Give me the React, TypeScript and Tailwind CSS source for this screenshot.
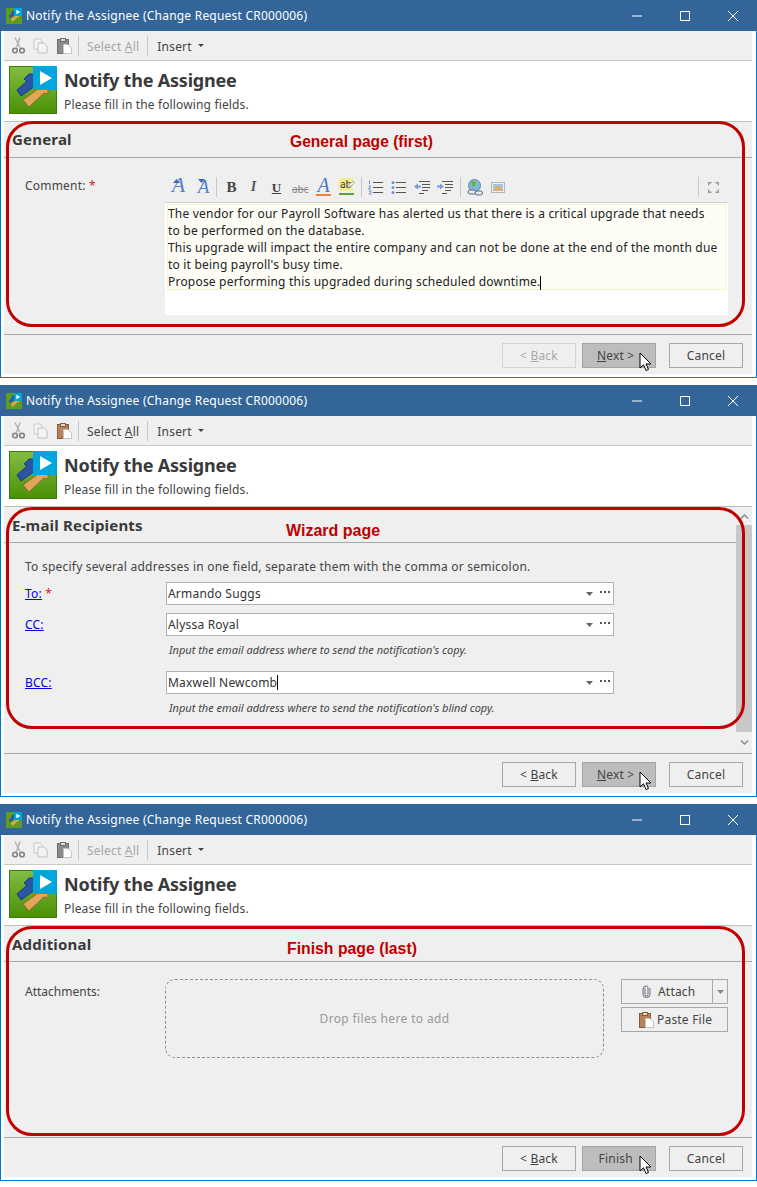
import React from "react";

const BLUE = "M8 24 L18 15 L15 13 L20 8 L26 8 L26 20 L12 30 Z";
const TAN = "M14 34 L29 23 L27 20 L37 20 L39 21 L39 28 L35 27 L20 41 Z";

function Logo() {
  return (
    <svg width="48" height="48" viewBox="0 0 48 48" className="shrink-0">
      <defs>
        <linearGradient id="lg" x1="0" y1="0" x2="0" y2="1">
          <stop offset="0" stopColor="#82bd45" />
          <stop offset="1" stopColor="#4a9005" />
        </linearGradient>
      </defs>
      <rect x="0.5" y="0.5" width="47" height="47" fill="url(#lg)" stroke="#3f7d0a" />
      <path d={BLUE} fill="#2a55a5" stroke="#1c3c78" />
      <path d={TAN} fill="#dfa858" stroke="#8a6a30" />
      <rect x="24" y="0" width="24" height="24" fill="#00a6dc" />
      <path d="M31 5 L43 12 L31 19 Z" fill="#fff" />
    </svg>
  );
}

function SmallLogo() {
  return (
    <svg width="16" height="16" viewBox="0 0 48 48" className="shrink-0">
      <rect width="48" height="48" fill="#5c9c20" />
      <path d={BLUE} fill="#2a55a5" />
      <path d={TAN} fill="#dfa858" />
      <rect x="24" y="0" width="24" height="24" fill="#00a6dc" />
      <path d="M31 5 L43 12 L31 19 Z" fill="#fff" />
    </svg>
  );
}

function Scissors() {
  return (
    <svg width="14" height="17" viewBox="0 0 14 17" fill="none">
      <path d="M3 0.5 L8 10.5 M8 0.5 L4.5 10.5" stroke="#b0b0b0" strokeWidth="1.4" />
      <circle cx="3" cy="13.5" r="2.3" stroke="#808080" strokeWidth="1.6" />
      <circle cx="10" cy="13.5" r="2.3" stroke="#808080" strokeWidth="1.6" />
    </svg>
  );
}

function CopyIcon() {
  return (
    <svg width="15" height="16" viewBox="0 0 15 16" fill="none">
      <path d="M1 1 H7 L9 3 V11 H1 Z" fill="#f4f4f4" stroke="#c8c8c8" />
      <path d="M5 5 H11 L14 8 V15 H5 Z" fill="#f4f4f4" stroke="#c0c0c0" />
    </svg>
  );
}

function PasteIcon({ on }: { on?: boolean }) {
  const body = on ? "#b8825a" : "#8a8a8a";
  const dark = on ? "#8a5a34" : "#6e6e6e";
  return (
    <svg width="15" height="16" viewBox="0 0 15 16" fill="none">
      <rect x="0.5" y="1.5" width="11" height="14" fill={body} stroke={dark} />
      <rect x="3.5" y="0.5" width="5" height="3" fill="#d8d8d8" stroke={dark} />
      <path d="M6.5 6.5 H11 L14.5 10 V15.5 H6.5 Z" fill="#fff" stroke="#c4c4c4" />
    </svg>
  );
}

function TitleBar() {
  return (
    <div className="h-[31px] bg-[#336599] flex items-center pl-[6px] text-white text-[12px] tracking-[0.22px] shrink-0">
      <SmallLogo />
      <span className="ml-[4px]">Notify the Assignee (Change Request CR000006)</span>
      <div className="ml-auto flex items-center">
        <svg width="10" height="2" viewBox="0 0 10 2" className="mr-[38px]"><path d="M0 1 H10" stroke="#fff" /></svg>
        <svg width="10" height="10" viewBox="0 0 10 10" className="mr-[38px]"><rect x="0.5" y="0.5" width="9" height="9" fill="none" stroke="#fff" /></svg>
        <svg width="10" height="10" viewBox="0 0 10 10" className="mr-[19px]"><path d="M0 0 L10 10 M10 0 L0 10" stroke="#fff" /></svg>
      </div>
    </div>
  );
}

function Toolbar({ active }: { active?: boolean }) {
  return (
    <div className="h-[30px] border-b border-[#c8c8c8] flex items-center pl-[8px] text-[12px] text-[#444] shrink-0">
      <Scissors />
      <span className="ml-[7px]"><CopyIcon /></span>
      <span className="ml-[9px]"><PasteIcon on={active} /></span>
      <div className="w-px h-[20px] bg-[#c8c8c8] ml-[6px]" />
      <span className={`ml-[8px] mt-[2px] ${active ? "" : "text-[#a6a6a6]"}`}>Select <u>A</u>ll</span>
      <div className="w-px h-[20px] bg-[#c8c8c8] ml-[8px]" />
      <span className="ml-[9px] mt-[2px]">Insert</span>
      <svg width="6" height="3" viewBox="0 0 6 3" className="ml-[6px]"><path d="M0 0 H6 L3 3 Z" fill="#444" /></svg>
    </div>
  );
}

function Header() {
  return (
    <div className="h-[61px] bg-white border-b border-[#c0c0c0] flex items-start pl-[5px] pt-[5px] shrink-0">
      <Logo />
      <div className="ml-[7px]">
        <div className="text-[18px] tracking-[-0.2px] font-bold text-[#3a3a3a] leading-[28px]">Notify the Assignee</div>
        <div className="text-[12px] tracking-[0.14px] text-[#444] leading-[17px] mt-[2px]">Please fill in the following fields.</div>
      </div>
    </div>
  );
}

function Section({ title, pt }: { title: string; pt: string }) {
  return (
    <div className={`h-[36px] border-b border-[#a8a8a8] pl-[8px] text-[15px] font-bold text-[#3a3a3a] leading-[22px] shrink-0 ${pt}`}>
      {title}
    </div>
  );
}

function Cursor() {
  return (
    <svg width="14" height="21" viewBox="0 0 14 21" className="absolute right-[2px] top-[8px]">
      <path d="M1 1 V16 L4.5 12.8 L7 18.5 L9.5 17.5 L7 12 H12 Z" fill="#fff" stroke="#000" />
    </svg>
  );
}

function Btn({ children, kind }: { children: React.ReactNode; kind?: "off" | "on" }) {
  const cls =
    kind === "off"
      ? "border-[#d4d4d4] text-[#a8a8a8]"
      : kind === "on"
      ? "border-[#a4a4a4] bg-[#bdbdbd] text-[#444]"
      : "border-[#a8a8a8] text-[#444]";
  return (
    <div className={`relative w-[74px] h-[25px] border flex items-center justify-center text-[12px] ${cls}`}>
      {children}
    </div>
  );
}

function Footer({ backOff, next }: { backOff?: boolean; next: React.ReactNode }) {
  return (
    <div className="h-[40px] border-t border-[#a8a8a8] flex items-start justify-end pt-[8px] pr-[9px] gap-[6px] shrink-0">
      <Btn kind={backOff ? "off" : undefined}>
        &lt;&nbsp;<u>B</u>ack
      </Btn>
      <Btn kind="on">
        {next}
        <Cursor />
      </Btn>
      <div className="ml-[7px]">
        <Btn>Cancel</Btn>
      </div>
    </div>
  );
}

function Ring({ cls }: { cls: string }) {
  return (
    <div className={`absolute left-[6px] w-[739px] border-[3px] border-[#c00000] rounded-[26px] pointer-events-none ${cls}`} />
  );
}

function Note({ children, cls }: { children: string; cls: string }) {
  return (
    <div className={`absolute font-['Liberation_Sans',sans-serif] tracking-normal font-bold leading-[18px] text-[#c00000] whitespace-nowrap ${cls}`}>
      {children}
    </div>
  );
}

function Window({ h, children, active, overlay }: { h: string; children: React.ReactNode; active?: boolean; overlay: React.ReactNode }) {
  return (
    <div className={`relative flex flex-col ${h}`}>
      <TitleBar />
      <div className="flex-1 min-h-0 border-x border-b border-[#0078d7] bg-white pl-[3px] pr-[3px] pb-[3px] flex">
        <div className="flex-1 min-w-0 bg-[#efefef] mr-px flex flex-col">
          <Toolbar active={active} />
          <Header />
          {children}
        </div>
      </div>
      {overlay}
    </div>
  );
}

function Sep({ ml }: { ml: string }) {
  return <div className={`w-px h-[20px] bg-[#c8c8c8] ${ml}`} />;
}

function FontA({ up }: { up?: boolean }) {
  return (
    <span className={`relative w-[17px] h-[18px] flex items-end justify-center font-['Liberation_Serif',serif] italic text-[#5580cc] leading-none tracking-normal ${up ? "text-[22px]" : "text-[19px]"}`}>
      A
      <svg width="7" height="4" viewBox="0 0 7 4" className="absolute left-[3px] top-[1px]">
        <path d={up ? "M0 4 L3.5 0 L7 4 Z" : "M0 0 H7 L3.5 4 Z"} fill="#3f68b4" />
      </svg>
    </span>
  );
}

function ListIcon({ dots }: { dots?: boolean }) {
  return (
    <svg width="15" height="15" viewBox="0 0 15 15" fill="none">
      <path d="M5 2.5 H15 M5 7.5 H15 M5 12.5 H15" stroke="#555" />
      {dots ? (
        <g fill="#6f90cc">
          <rect x="0.5" y="1" width="3" height="3" rx="1.5" />
          <rect x="0.5" y="6" width="3" height="3" rx="1.5" />
          <rect x="0.5" y="11" width="3" height="3" rx="1.5" />
        </g>
      ) : (
        <path d="M1.5 0.5 V4 M0.5 6 H3 L0.5 9 H3 M0.5 11 H3 V14 H0.5" stroke="#6f90cc" />
      )}
    </svg>
  );
}

function IndentIcon({ out }: { out?: boolean }) {
  return (
    <svg width="16" height="15" viewBox="0 0 16 15" fill="none">
      <path d="M5 1.5 H16 M8 4.5 H16 M8 7.5 H16 M8 10.5 H14 M5 13.5 H10" stroke="#555" />
      <path d={out ? "M0 6.5 L4 3.5 V5.5 H7 V7.5 H4 V9.5 Z" : "M7 6.5 L3 3.5 V5.5 H0 V7.5 H3 V9.5 Z"} fill="#7c9cd8" />
    </svg>
  );
}

function EditorToolbar() {
  return (
    <div className="h-[30px] flex items-center text-[#444] tracking-normal">
      <span className="ml-[5px]"><FontA up /></span>
      <span className="ml-[8px]"><FontA /></span>
      <Sep ml="ml-[4px]" />
      <span className="ml-[9px] w-[11px] text-center font-['Liberation_Serif',serif] font-bold text-[15px] leading-none">B</span>
      <span className="ml-[12px] w-[9px] text-center font-['Liberation_Serif',serif] font-bold italic text-[14px] leading-none text-[#555]">I</span>
      <span className="ml-[12px] w-[13px] text-center font-['Liberation_Serif',serif] font-bold underline text-[13px] leading-none text-[#444]">U</span>
      <span className="ml-[9px] w-[15px] text-center text-[10px] leading-none text-[#888] line-through mt-[3px]">abc</span>
      <span className="ml-[9px] w-[15px] h-[18px] flex flex-col items-center font-['Liberation_Serif',serif] italic text-[20px] leading-[14px] text-[#4a78c8]">
        A<span className="w-[15px] h-[2px] bg-[#ee8040] mt-[2px] shrink-0" />
      </span>
      <span className="relative ml-[8px] w-[16px] h-[18px] flex flex-col items-start text-[10px] leading-[13px] text-[#333]">
        <span className="bg-[#f4ee90] px-px">ab</span>
        <span className="w-[15px] h-[2px] bg-[#5aa03c] mt-[2px]" />
        <svg width="8" height="9" viewBox="0 0 8 9" className="absolute right-0 top-[2px]" fill="none">
          <path d="M1 8 L2 5 L6 1 L7.5 2.5 L3.5 6.5 Z" fill="#f4f4f4" stroke="#9a9a9a" strokeWidth="0.8" />
        </svg>
      </span>
      <Sep ml="ml-[6px]" />
      <span className="ml-[6px]"><ListIcon /></span>
      <span className="ml-[8px]"><ListIcon dots /></span>
      <span className="ml-[8px]"><IndentIcon out /></span>
      <span className="ml-[7px]"><IndentIcon /></span>
      <Sep ml="ml-[7px]" />
      <svg width="16" height="17" viewBox="0 0 16 17" className="ml-[6px]">
        <circle cx="7.5" cy="6.5" r="6" fill="#7fb8d8" stroke="#5a8aa8" />
        <path d="M4 3 Q7 1 9 3 L8 7 L5 8 Z" fill="#6fb04c" />
        <rect x="1" y="11" width="8" height="4" rx="2" fill="#e4e8f0" stroke="#5a6a88" />
        <rect x="8" y="12" width="7.5" height="4" rx="2" fill="#e4e8f0" stroke="#5a6a88" />
      </svg>
      <svg width="14" height="11" viewBox="0 0 14 11" className="ml-[8px]">
        <rect x="0.5" y="0.5" width="13" height="10" fill="#f0f0f0" stroke="#b4b4b4" />
        <rect x="2" y="2" width="10" height="7" fill="#a8c4e0" />
        <path d="M2 9 L5 4 H9 L12 9 Z" fill="#d8b070" />
      </svg>
      <div className="ml-auto mr-[33px] flex items-center">
        <div className="w-px h-[20px] bg-[#c8c8c8]" />
        <svg width="11" height="11" viewBox="0 0 11 11" className="ml-[9px]" fill="none" stroke="#999" strokeWidth="1.4">
          <path d="M0.7 3.5 V0.7 H3.5 M7.5 0.7 H10.3 V3.5 M10.3 7.5 V10.3 H7.5 M3.5 10.3 H0.7 V7.5" />
        </svg>
      </div>
    </div>
  );
}

function GeneralPage() {
  return (
    <div className="flex-1 min-h-0 flex pl-[21px] pt-[14px] text-[12px] text-[#444]">
      <div className="w-[140px] pt-[5px] leading-[17px]">
        Comment: <span className="text-[#e02020]">*</span>
      </div>
      <div className="flex-1 min-w-0 flex flex-col">
        <EditorToolbar />
        <div className="mr-[24px] h-[113px] border-t border-[#cfcfcf] bg-white px-[2px] pt-px">
          <div className="h-[86px] bg-[#fdfdf6] border border-[#f6f3cc] leading-[17px] text-[#222] whitespace-nowrap">
            The vendor for our Payroll Software has alerted us that there is a critical upgrade that needs
            <br />
            to be performed on the database.
            <br />
            This upgrade will impact the entire company and can not be done at the end of the month due
            <br />
            to it being payroll's busy time.
            <br />
            Propose performing this upgraded during scheduled downtime.
            <span className="inline-block w-px h-[14px] bg-black align-middle" />
          </div>
        </div>
      </div>
    </div>
  );
}

function Field({ value, caret }: { value: string; caret?: boolean }) {
  return (
    <div className="w-[448px] h-[23px] border border-[#b0b0b0] bg-white flex items-center pl-px text-[12px] text-[#333]">
      <span>{value}</span>
      {caret && <span className="w-px h-[15px] bg-black" />}
      <svg width="7" height="4" viewBox="0 0 7 4" className="ml-auto"><path d="M0 0 H7 L3.5 4 Z" fill="#666" /></svg>
      <span className="ml-[7px] mr-[3px] flex gap-[2px] -mt-[3px]">
        <span className="w-[2px] h-[2px] bg-[#555]" />
        <span className="w-[2px] h-[2px] bg-[#555]" />
        <span className="w-[2px] h-[2px] bg-[#555]" />
      </span>
    </div>
  );
}

function FieldRow({ label, req, value, caret, hint, mt }: { label: string; req?: boolean; value: string; caret?: boolean; hint?: string; mt: string }) {
  return (
    <div className={mt}>
      <div className="flex items-center">
        <div className="w-[141px] text-[12px]">
          <u className="text-[#0000e0]">{label}</u>
          {req && <span className="text-[#e02020]"> *</span>}
        </div>
        <Field value={value} caret={caret} />
      </div>
      {hint && <div className="ml-[144px] mt-[6px] text-[11px] tracking-normal italic leading-[16px] text-[#444]">{hint}</div>}
    </div>
  );
}

function Scrollbar() {
  return (
    <div className="w-[16px] flex flex-col items-center pt-[3px] shrink-0">
      <svg width="9" height="5" viewBox="0 0 9 5" className="mt-[4px]" fill="none"><path d="M1 4.5 L4.5 1 L8 4.5" stroke="#888" strokeWidth="1.4" /></svg>
      <div className="w-full h-[207px] bg-[#c8c8c8] mt-[6px]" />
      <svg width="9" height="5" viewBox="0 0 9 5" className="mt-[8px]" fill="none"><path d="M1 0.5 L4.5 4 L8 0.5" stroke="#888" strokeWidth="1.4" /></svg>
    </div>
  );
}

function WizardPage() {
  return (
    <div className="flex-1 min-h-0 flex">
      <div className="flex-1 min-w-0 flex flex-col">
        <Section title="E-mail Recipients" pt="pt-[7px]" />
        <div className="pl-[21px] pt-[15px] text-[12px] text-[#444]">
          <div className="leading-[17px] tracking-[0.23px]">To specify several addresses in one field, separate them with the comma or semicolon.</div>
          <FieldRow mt="mt-[7px]" label="To:" req value="Armando Suggs" />
          <FieldRow mt="mt-[8px]" label="CC:" value="Alyssa Royal" hint="Input the email address where to send the notification's copy." />
          <FieldRow mt="mt-[13px]" label="BCC:" value="Maxwell Newcomb" caret hint="Input the email address where to send the notification's blind copy." />
        </div>
      </div>
      <Scrollbar />
    </div>
  );
}

function FinishPage() {
  return (
    <div className="flex-1 min-h-0 flex pl-[21px] pt-[17px] text-[12px] text-[#444]">
      <div className="w-[140px] pt-[4px] leading-[17px] tracking-normal">Attachments:</div>
      <div className="w-[439px] h-[79px] border border-dashed border-[#909090] rounded-[10px] flex items-center justify-center text-[#999] tracking-[0.35px]">
        Drop files here to add
      </div>
      <div className="ml-[17px] w-[107px] flex flex-col gap-[3px]">
        <div className="h-[25px] border border-[#a8a8a8] flex">
          <div className="flex-1 flex items-center pl-[20px] gap-[7px]">
            <svg width="9" height="13" viewBox="0 0 9 13" fill="none" stroke="#667" strokeWidth="1">
              <path d="M3 3 V9.5 Q3 11 4.5 11 Q6 11 6 9.5 V3 Q6 1 4.5 1 Q1 1 1 4 V9.5 Q1 12.5 4.5 12.5 Q8 12.5 8 9.5 V3" />
            </svg>
            <span>Attach</span>
          </div>
          <div className="w-[15px] border-l border-[#a8a8a8] flex items-center justify-center">
            <svg width="7" height="4" viewBox="0 0 7 4"><path d="M0 0 H7 L3.5 4 Z" fill="#888" /></svg>
          </div>
        </div>
        <div className="h-[25px] border border-[#a8a8a8] flex items-center pl-[17px] gap-[3px]">
          <PasteIcon on />
          <span>Paste File</span>
        </div>
      </div>
    </div>
  );
}

export default function App() {
  return (
    <div className="w-[757px] h-[1187px] bg-white flex flex-col gap-[7px] font-['Noto_Sans',sans-serif] tracking-[0.2px]">
      <Window h="h-[378px]" overlay={<><Ring cls="top-[121px] h-[206px]" /><Note cls="left-[290px] top-[133px] text-[15.6px]">General page (first)</Note></>}>
        <Section title="General" pt="pt-[6px]" />
        <GeneralPage />
        <Footer backOff next={<span><u>N</u>ext &gt;&nbsp;&nbsp;</span>} />
      </Window>
      <Window h="h-[412px]" active overlay={<><Ring cls="top-[122px] h-[222px]" /><Note cls="left-[286px] top-[137px] text-[16px]">Wizard page</Note></>}>
        <WizardPage />
        <Footer next={<span><u>N</u>ext &gt;&nbsp;&nbsp;</span>} />
      </Window>
      <Window h="h-[377px]" overlay={<><Ring cls="top-[122px] h-[210px]" /><Note cls="left-[287px] top-[136px] text-[15.8px]">Finish page (last)</Note></>}>
        <Section title="Additional" pt="pt-[7px]" />
        <FinishPage />
        <Footer next={<span>Finish&nbsp;&nbsp;</span>} />
      </Window>
    </div>
  );
}
